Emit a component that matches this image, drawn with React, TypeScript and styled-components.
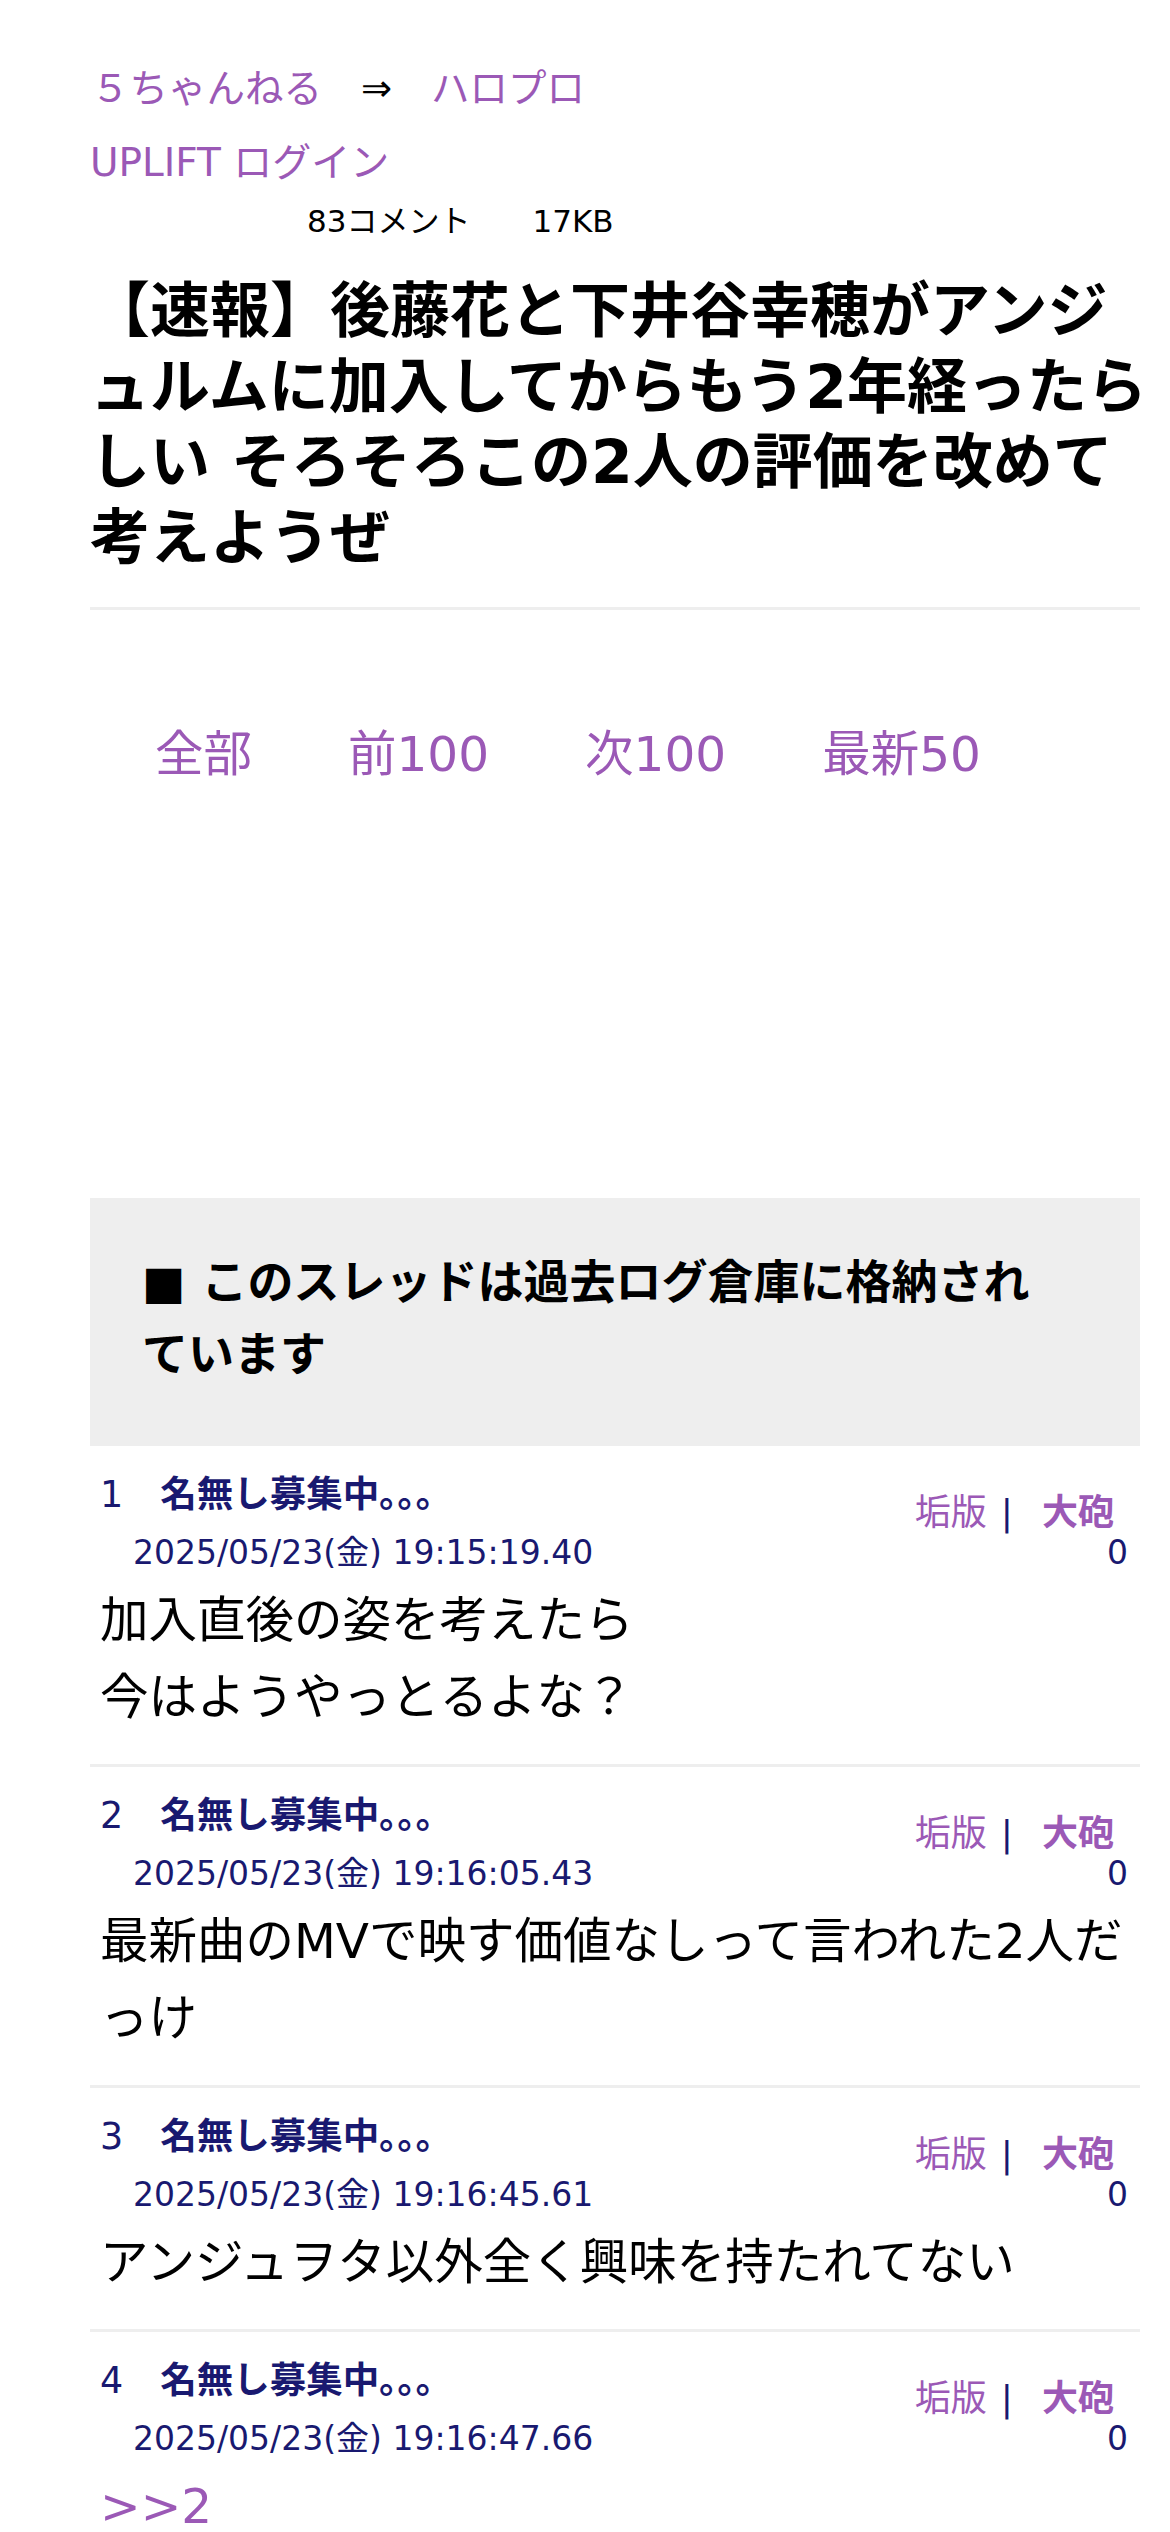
import React from "react";
import styled, { createGlobalStyle } from "styled-components";

const GlobalStyle = createGlobalStyle`
  html, body { margin: 0; padding: 0; background: #ffffff; }
  body {
    font-family: "DejaVu Sans", "Noto Sans CJK JP", sans-serif;
    color: #000000;
  }
  a { text-decoration: none; color: inherit; }
`;

const PURPLE = "#9b59b6";
const NAVY = "#191970";

const Page = styled.div`
  width: 1050px;
  margin-left: 90px;
  padding-top: 67px;
`;

const Breadcrumb = styled.nav`
  display: flex;
  align-items: center;
  gap: 39px;
  padding-left: 1px;
  font-size: 38.5px;
  line-height: 44px;
`;

const CrumbLink = styled.a`
  color: ${PURPLE};
`;

const Arrow = styled.span`
  color: #000;
  font-size: 37px;
`;

const LoginLink = styled.a`
  display: block;
  margin-top: 30px;
  font-size: 39px;
  line-height: 44px;
  color: ${PURPLE};
`;

const Meta = styled.div`
  display: flex;
  gap: 62px;
  margin-top: 18px;
  padding-left: 217px;
  font-size: 31px;
  line-height: 36px;
`;

const TitleBlock = styled.header`
  margin-top: 35px;
  padding-bottom: 31px;
  border-bottom: 3px solid #eeeeee;
`;

const Title = styled.h1`
  margin: 0 -20px 0 0;
  font-size: 60px;
  line-height: 75.5px;
  font-weight: bold;
`;

const ThreadNav = styled.div`
  display: flex;
  gap: 96px;
  margin-top: 114px;
  padding-left: 65px;
  font-size: 48.5px;
  line-height: 60px;
`;

const NavLink = styled.a`
  color: ${PURPLE};
`;

const AdSlot = styled.div`
  height: 414px;
`;

const Notice = styled.div`
  background: #eeeeee;
  padding: 48px 80px 56px 52px;
  font-size: 46px;
  line-height: 72px;
  font-weight: bold;
`;

const Post = styled.article`
  padding: 27px 12px 28px 10px;
  border-bottom: 3px solid #eeeeee;
`;

const PostHead = styled.div`
  display: flex;
  justify-content: space-between;
  align-items: flex-start;
`;

const HeadLeft = styled.div`
  display: flex;
  flex-direction: column;
`;

const NameLine = styled.div`
  display: flex;
  gap: 37px;
  font-size: 36.5px;
  line-height: 44px;
  color: ${NAVY};
`;

const PostName = styled.span`
  font-weight: bold;
`;

const DateLine = styled.div`
  margin-top: 14px;
  padding-left: 33px;
  font-size: 33px;
  line-height: 44px;
  color: ${NAVY};
`;

const HeadRight = styled.div`
  display: flex;
  flex-direction: column;
  align-items: flex-end;
  padding-top: 20px;
`;

const ActionLine = styled.div`
  display: flex;
  align-items: baseline;
  font-size: 36px;
  line-height: 40px;
  margin-right: 14px;
`;

const ActionLink = styled.a<{ $bold?: boolean }>`
  color: ${PURPLE};
  font-weight: ${(p) => (p.$bold ? "bold" : "normal")};
`;

const Pipe = styled.span`
  color: ${NAVY};
  margin: 0 29px 0 14px;
`;

const CountLine = styled.div`
  font-size: 33px;
  line-height: 40px;
  color: ${NAVY};
`;

const PostBody = styled.div`
  margin-top: 7px;
  font-size: 48.5px;
  line-height: 77px;
`;

const Anchor = styled.a`
  color: ${PURPLE};
`;

type PostData = {
  no: number;
  date: string;
  body: React.ReactNode;
};

const posts: PostData[] = [
  {
    no: 1,
    date: "2025/05/23(金) 19:15:19.40",
    body: (
      <>
        加入直後の姿を考えたら
        <br />
        今はようやっとるよな？
      </>
    ),
  },
  {
    no: 2,
    date: "2025/05/23(金) 19:16:05.43",
    body: <>最新曲のMVで映す価値なしって言われた2人だっけ</>,
  },
  {
    no: 3,
    date: "2025/05/23(金) 19:16:45.61",
    body: <>アンジュヲタ以外全く興味を持たれてない</>,
  },
  {
    no: 4,
    date: "2025/05/23(金) 19:16:47.66",
    body: <Anchor href="#">&gt;&gt;2</Anchor>,
  },
];

function PostItem({ post }: { post: PostData }) {
  return (
    <Post>
      <PostHead>
        <HeadLeft>
          <NameLine>
            <span>{post.no}</span>
            <PostName>名無し募集中｡｡｡</PostName>
          </NameLine>
          <DateLine>{post.date}</DateLine>
        </HeadLeft>
        <HeadRight>
          <ActionLine>
            <ActionLink href="#">垢版</ActionLink>
            <Pipe>|</Pipe>
            <ActionLink href="#" $bold>
              大砲
            </ActionLink>
          </ActionLine>
          <CountLine>0</CountLine>
        </HeadRight>
      </PostHead>
      <PostBody>{post.body}</PostBody>
    </Post>
  );
}

export default function App() {
  return (
    <>
      <GlobalStyle />
      <Page>
        <Breadcrumb>
          <CrumbLink href="#">５ちゃんねる</CrumbLink>
          <Arrow>⇒</Arrow>
          <CrumbLink href="#">ハロプロ</CrumbLink>
        </Breadcrumb>
        <LoginLink href="#">UPLIFT ログイン</LoginLink>
        <Meta>
          <span>83コメント</span>
          <span>17KB</span>
        </Meta>
        <TitleBlock>
          <Title>
            【速報】後藤花と下井谷幸穂がアンジュルムに加入してからもう2年経ったらしい そろそろこの2人の評価を改めて考えようぜ
          </Title>
        </TitleBlock>
        <ThreadNav>
          <NavLink href="#">全部</NavLink>
          <NavLink href="#">前100</NavLink>
          <NavLink href="#">次100</NavLink>
          <NavLink href="#">最新50</NavLink>
        </ThreadNav>
        <AdSlot />
        <Notice>■ このスレッドは過去ログ倉庫に格納されています</Notice>
        {posts.map((p) => (
          <PostItem key={p.no} post={p} />
        ))}
      </Page>
    </>
  );
}
